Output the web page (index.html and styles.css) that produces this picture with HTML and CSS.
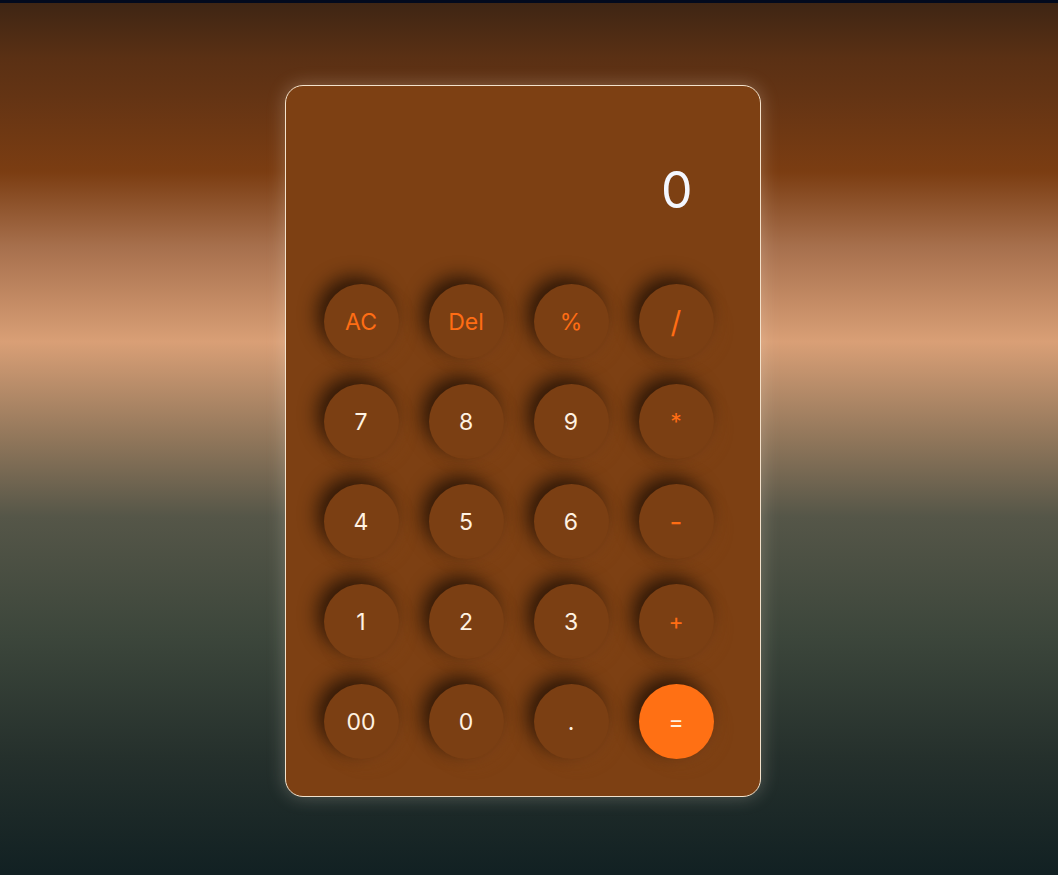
FILE: index.html
```html
<!DOCTYPE html>
<html lang="en">
<head>
<meta charset="utf-8">
<title>Calculator</title>
<link rel="stylesheet" href="styles.css">
</head>
<body>
<div class="page">
  <div class="calculator">
    <div class="display">0</div>
    <div class="keys">
      <button class="key op">AC</button>
      <button class="key op">Del</button>
      <button class="key op">%</button>
      <button class="key op slash">/</button>
      <button class="key">7</button>
      <button class="key">8</button>
      <button class="key">9</button>
      <button class="key op">*</button>
      <button class="key">4</button>
      <button class="key">5</button>
      <button class="key">6</button>
      <button class="key op minus">-</button>
      <button class="key">1</button>
      <button class="key">2</button>
      <button class="key">3</button>
      <button class="key op">+</button>
      <button class="key">00</button>
      <button class="key">0</button>
      <button class="key">.</button>
      <button class="key equal">=</button>
    </div>
  </div>
</div>
</body>
</html>
```
FILE: styles.css
```css
* { box-sizing: border-box; }
html, body { margin: 0; padding: 0; }
body {
  min-height: 875px;
  font-family: "Inter", "Open Sans", sans-serif;
  border-top: 3px solid #020a1e;
  background: linear-gradient(to bottom,
    #3d2514 0px,
    #5a3014 57px,
    #643414 97px,
    #7b3d12 172px,
    #a7704d 247px,
    #d99f76 342px,
    #92775b 437px,
    #555648 517px,
    #3c463b 637px,
    #25302c 757px,
    #122123 872px);
}
.page {
  display: flex;
  justify-content: center;
  padding: 82px 13px 0 0;
}
.calculator {
  width: 476px;
  height: 712px;
  background: #7d4013;
  border: 1px solid #f3e2cc;
  border-radius: 18px;
  box-shadow: 0 0 18px rgba(255, 240, 225, 0.25);
  padding: 0 44px 37px 38px;
}
.display {
  height: 198px;
  display: flex;
  justify-content: flex-end;
  align-items: center;
  padding: 10px 23px 0 0;
  color: #f4f7ff;
  font-size: 50px;
  font-weight: 400;
}
.keys {
  display: grid;
  grid-template-columns: repeat(4, 75px);
  grid-auto-rows: 75px;
  column-gap: 30px;
  row-gap: 25px;
}
.key {
  width: 75px;
  height: 75px;
  border: none;
  border-radius: 50%;
  background: #7b3f13;
  color: #fff2e2;
  font-family: inherit;
  font-size: 23px;
  font-weight: 400;
  display: flex;
  align-items: center;
  justify-content: center;
  padding: 0;
  box-shadow: -7px -8px 18px rgba(30, 15, 5, 0.8), 6px 7px 14px rgba(140, 75, 30, 0.25);
}
.key.op { color: #ff6d14; }
.key.slash { font-size: 30px; }
.key.minus { font-size: 28px; }
.key.equal {
  background: #ff7014;
  color: #fff2e2;
}
```
